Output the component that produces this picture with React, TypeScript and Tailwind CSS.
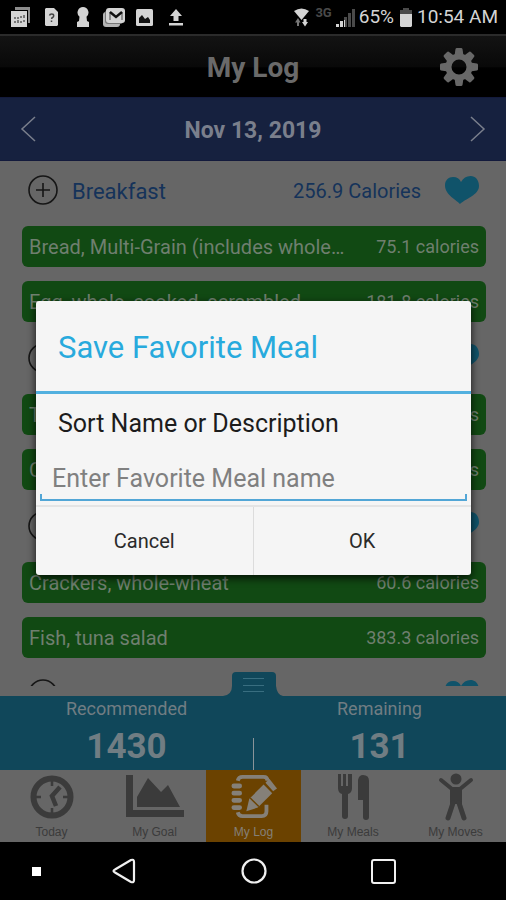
import { useState } from "react";
import type { ReactNode } from "react";

type Food = { name: string; calories: string };
type Meal = { id: string; name?: string; calories?: string; foods: Food[] };

const meals: Meal[] = [
  {
    id: "breakfast",
    name: "Breakfast",
    calories: "256.9",
    foods: [
      { name: "Bread, Multi-Grain (includes whole…", calories: "75.1" },
      { name: "Egg, whole, cooked, scrambled", calories: "181.8" },
    ],
  },
  {
    id: "lunch",
    foods: [
      { name: "T", calories: "" },
      { name: "C", calories: "" },
    ],
  },
  {
    id: "dinner",
    foods: [
      { name: "Crackers, whole-wheat", calories: "60.6" },
      { name: "Fish, tuna salad", calories: "383.3" },
    ],
  },
  { id: "snack", foods: [] },
];

function StatusBar() {
  return (
    <div className="flex h-[34px] shrink-0 items-center justify-between bg-black pl-[11px] pr-2 text-[#d4d4d4]">
      <div className="flex items-center">
        <svg className="mr-[14px]" width="20" height="20" viewBox="0 0 20 20">
          <path d="M4 0h15v16h-2V3H4z" fill="#8c8c8c" />
          <path d="M0 4h16v16H0z" fill="#d4d4d4" />
          <path d="M3 10h2v2H3zm3 0h2v2H6zm3-1h2v2H9zm3-1h2v3h-2zM3 14h2v2H3zm3-1h2v3H6zm3 1h2v2H9zm3-1h2v2h-2z" fill="#777" />
        </svg>
        <svg className="mr-[19px]" width="13" height="18" viewBox="0 0 13 18">
          <path d="M1 0h8l4 4v13l-1 1H1l-1-1V1z" fill="#d4d4d4" />
          <path d="M4.5 7.5q.3-1.500 2.200-1.500 2 0 2 1.700 0 1.200-1.200 1.800-.8.400-.8 1.500M6.500 12.500v1.500" fill="none" stroke="#444" strokeWidth="1.500" />
        </svg>
        <svg className="mr-[14px]" width="12" height="20" viewBox="0 0 12 20">
          <path d="M6 0a5.500 5.500 0 0 1 3.500 9.700L10 14l2 1v5H0v-5l2-1 .5-4.300A5.500 5.500 0 0 1 6 0z" fill="#d4d4d4" />
        </svg>
        <svg className="mr-[11px]" width="22" height="19" viewBox="0 0 22 19">
          <rect x="0" y="4" width="17" height="15" rx="3" fill="#b5b5b5" />
          <rect x="2" y="2" width="18" height="14" rx="3" fill="#777" />
          <rect x="3" y="0" width="19" height="15" rx="3" fill="#d4d4d4" />
          <path d="M7 12V4M19 12V4" stroke="#777" strokeWidth="1.500" />
          <path d="M7 4l6 5 6-5" fill="none" stroke="#111" strokeWidth="2.400" />
        </svg>
        <svg className="mr-4" width="17" height="17" viewBox="0 0 17 17">
          <rect width="17" height="17" rx="1.500" fill="#d4d4d4" />
          <path d="M3 14V9l3-3 3 4 3-2 2 3v3z" fill="#111" />
        </svg>
        <svg width="14" height="17" viewBox="0 0 14 17">
          <path d="M7 0l6 7h-3.500v5h-5V7H1zM0 14h14v2.500H0z" fill="#d4d4d4" />
        </svg>
      </div>
      <div className="flex items-center text-[19px] leading-6">
        <svg className="mr-[6px]" width="15" height="19" viewBox="0 0 15 19">
          <path d="M0 3Q7.500-2 15 3L7.500 12z" fill="#d4d4d4" />
          <path d="M4 10l2.500 4.500H5V18H3v-3.500H1z" fill="#777" />
          <path d="M11 18.500l3-4.500h-1.500v-3h-3v3H8z" fill="#d4d4d4" />
        </svg>
        <span className="mr-1 self-start text-[13px] font-bold leading-4 text-[#4a4a4a]">3G</span>
        <svg className="mr-1" width="19" height="19" viewBox="0 0 19 19">
          <path d="M0 16h3v3H0zM4 13h3v6H4z" fill="#d4d4d4" />
          <path d="M8 9h3v10H8zM12 5h3v14h-3zM16 1h3v18h-3z" fill="#4a4a4a" />
          <path d="M8 12h1v7H8z" fill="#d4d4d4" />
        </svg>
        <span className="mr-[6px]">65%</span>
        <svg className="mr-[5px]" width="12" height="19" viewBox="0 0 12 19">
          <path d="M3 0h6v2h3v4H0V2h3z" fill="#4a4a4a" />
          <path d="M0 6h12v12l-1 1H1l-1-1z" fill="#d4d4d4" />
        </svg>
        <span>10:54 AM</span>
      </div>
    </div>
  );
}

function Gear() {
  return (
    <svg width="38" height="38" viewBox="-19 -19 38 38" fill="#686868">
      {[0, 45, 90, 135, 180, 225, 270, 315].map((a) => (
        <path key={a} d="M-4.500-11L-3.500-18q.3-1 1.300-1h4.400q1 0 1.300 1L4.500-11z" transform={`rotate(${a})`} />
      ))}
      <circle r="10.500" fill="none" stroke="#686868" strokeWidth="6" />
    </svg>
  );
}

function Header() {
  return (
    <header className="grid h-[63px] shrink-0 grid-cols-[1fr_auto_1fr] items-center border-t-2 border-[#2b2b2b] bg-linear-to-b from-[#131313] from-0% via-[#090909] via-50% to-black to-55% px-7">
      <span />
      <h1 className="pt-0.5 text-[28px] font-bold leading-8 text-[#6a6a6a]">My Log</h1>
      <button aria-label="Settings" className="justify-self-end">
        <Gear />
      </button>
    </header>
  );
}

function DateBar() {
  return (
    <div className="flex h-16 shrink-0 items-center justify-between border-y border-[#131a3c] bg-[#16213f] px-5 text-[#7a7f8c]">
      <button aria-label="Previous day">
        <svg width="17" height="28" viewBox="0 0 17 28" fill="none" stroke="currentColor" strokeWidth="1.500">
          <path d="M15 2L2 14l13 12" />
        </svg>
      </button>
      <h2 className="pt-1 text-[23px] font-bold leading-7">Nov 13, 2019</h2>
      <button aria-label="Next day">
        <svg width="17" height="28" viewBox="0 0 17 28" fill="none" stroke="currentColor" strokeWidth="1.500">
          <path d="M2 2l13 12L2 26" />
        </svg>
      </button>
    </div>
  );
}

function MealSection({ meal }: { meal: Meal }) {
  return (
    <section className="pb-[7px]">
      <div className="flex h-[58px] items-center justify-between pl-7 pr-[27px] text-[#15335a]">
        <div className="flex items-center gap-[14px]">
          <button aria-label={`Add to ${meal.id}`}>
            <svg width="30" height="30" viewBox="0 0 30 30" fill="none" stroke="#161616" strokeWidth="1.600">
              <circle cx="15" cy="15" r="14" />
              <path d="M15 8v14M8 15h14" />
            </svg>
          </button>
          {meal.name && <h3 className="pt-1 text-[22px] leading-7">{meal.name}</h3>}
        </div>
        <div className="flex items-center gap-[23px]">
          {meal.calories && <span className="pt-0.5 text-xl leading-7">{meal.calories} Calories</span>}
          <button aria-label={`Save ${meal.id} as favorite`}>
            <svg width="35" height="28" viewBox="0 0 35 28">
              <path d="M16 28C14 25 1 19 1 9.500 1 4 4.500 1 9 1c4 0 6.500 1.500 8 5C19 2 22.500 0 26.500 0 31.500 0 35 4 35 10c0 9-14 13-19 18z" fill="#10536a" />
            </svg>
          </button>
        </div>
      </div>
      <ul className="mt-[7px] flex flex-col gap-[14px] pl-[22px] pr-5">
        {meal.foods.map((food) => (
          <li
            key={food.name}
            className="flex h-[41px] items-center justify-between gap-4 rounded-md bg-[#114913] px-[7px] text-xl leading-7 text-[#6f7f6f]"
          >
            <span className="truncate">{food.name}</span>
            <span className="shrink-0 text-lg leading-7">{food.calories} calories</span>
          </li>
        ))}
      </ul>
    </section>
  );
}

function Summary() {
  return (
    <div className="relative grid h-[74px] shrink-0 grid-cols-2 bg-[#10475a] text-center text-[#707d83]">
      <svg className="absolute -top-6 left-1/2 -translate-x-1/2" width="60" height="25" viewBox="0 0 60 25">
        <path d="M0 25v-1q9-1 9-10V4q0-4 4-4h36q4 0 4 4v10q1 9 7 10v1z" fill="#10475a" />
        <path d="M20 6.500h21M20 13.500h21M20 19.500h21" stroke="#396e80" />
      </svg>
      <div className="pt-px">
        <p className="text-lg leading-6">Recommended</p>
        <p className="mt-2 text-[35px] font-bold leading-9">1430</p>
      </div>
      <div className="pt-px">
        <p className="text-lg leading-6">Remaining</p>
        <p className="mt-2 text-[35px] font-bold leading-9">131</p>
      </div>
      <span className="absolute bottom-0 left-1/2 h-8 w-px bg-[#8a9499]" />
    </div>
  );
}

const tabs: { label: string; icon: ReactNode }[] = [
  {
    label: "Today",
    icon: (
      <svg width="44" height="46" viewBox="0 0 44 46" fill="none" stroke="currentColor">
        <circle cx="22" cy="23" r="18.500" strokeWidth="6" />
        <path d="M22 7v5M22 34v5M6 23h5M33 23h5" strokeWidth="2.500" />
        <path d="M30 13l-8 9 4 10" strokeWidth="4.500" />
      </svg>
    ),
  },
  {
    label: "My Goal",
    icon: (
      <svg width="58" height="46" viewBox="0 0 58 46" fill="currentColor">
        <path d="M0 1h7v35h51v7H0z" />
        <path d="M11 33V23L22 4l13 14 7-7 12 22z" />
      </svg>
    ),
  },
  {
    label: "My Log",
    icon: (
      <svg width="46" height="46" viewBox="0 0 48 46" fill="none" stroke="currentColor">
        <path d="M7 6q1-4 5-4h22q4 0 4 4M7 39q1 4 5 4h20q5 0 5-5v-7" strokeWidth="4" />
        <path d="M3 11.500h6M3 19h6M3 26.500h6M3 34h6" strokeWidth="5" strokeLinecap="round" />
        <path d="M34 10l9 9-15 15-12 4 3-13z" fill="currentColor" stroke="none" />
        <path d="M36 8l4-4 8 10-4 3z" fill="currentColor" stroke="none" />
        <path d="M20 24l9 9" stroke="#6b4200" strokeWidth="1.500" />
      </svg>
    ),
  },
  {
    label: "My Meals",
    icon: (
      <svg width="32" height="46" viewBox="0 0 32 46" fill="currentColor">
        <path d="M1 0h3v12h2V0h3v12h2V0h4v14q0 5-4 6v22q0 3-3 3t-3-3V20q-4-1-4-6z" />
        <path d="M21 6q1-5 5-5 6 0 6 6v36q0 3-3 3t-3-3V26h-5z" />
      </svg>
    ),
  },
  {
    label: "My Moves",
    icon: (
      <svg width="36" height="48" viewBox="0 0 36 48" fill="none" stroke="currentColor">
        <circle cx="18" cy="6" r="5.500" fill="currentColor" stroke="none" />
        <path d="M3 7l11 9h8l11-9" strokeWidth="4" strokeLinecap="round" />
        <path d="M12 14h12v17H12z" fill="currentColor" stroke="none" />
        <path d="M15 30l-5 15M21 30l5 15" strokeWidth="5" strokeLinecap="round" />
      </svg>
    ),
  },
];

function TabBar() {
  const [active, setActive] = useState("My Log");
  return (
    <nav className="grid h-[72px] shrink-0 grid-cols-[103fr_103fr_95fr_104fr_101fr] bg-[#666]">
      {tabs.map((tab) => (
        <button
          key={tab.label}
          onClick={() => setActive(tab.label)}
          className={`flex flex-col items-center justify-start gap-1 pt-1 font-['Liberation_Sans',Arial,sans-serif] ${
            tab.label === active ? "bg-[#6b4200] text-[#858078]" : "text-[#3b3b3b]"
          }`}
        >
          <span className="flex h-[46px] items-center">{tab.icon}</span>
          <span className="text-xs leading-4">{tab.label}</span>
        </button>
      ))}
    </nav>
  );
}

function SystemNav() {
  return (
    <div className="grid h-[58px] shrink-0 grid-cols-[73fr_102fr_157fr_102fr_72fr] items-center justify-items-center bg-black">
      <span className="size-[9px] bg-white" />
      <button aria-label="Back">
        <svg width="24" height="26" viewBox="0 0 24 26" fill="none" stroke="#f0f0f0" strokeWidth="2.200" strokeLinejoin="round">
          <path d="M3 11.500L19 2q3-1 3 2v18q0 3-3 2L3 14.500q-3-1.500 0-3z" />
        </svg>
      </button>
      <button aria-label="Home">
        <svg width="26" height="26" viewBox="0 0 26 26" fill="none" stroke="#f0f0f0" strokeWidth="2.200">
          <circle cx="13" cy="13" r="11.500" />
        </svg>
      </button>
      <button aria-label="Recent apps" className="size-[25px] rounded-[3px] border-2 border-[#f0f0f0]" />
    </div>
  );
}

function FavoriteDialog({ onClose }: { onClose: () => void }) {
  const [name, setName] = useState("");
  return (
    <div className="absolute inset-0 flex items-center justify-center pl-9 pr-[35px]">
      <div
        role="dialog"
        aria-labelledby="favorite-title"
        className="w-full rounded-[3px] bg-[#f5f5f5] shadow-[0_3px_8px_rgba(0,0,0,0.8)]"
      >
        <h2 id="favorite-title" className="border-b-[3px] border-[#52b0df] px-[22px] pb-[25px] pt-[29px] text-[31px] leading-9 text-[#28aadd]">
          Save Favorite Meal
        </h2>
        <div className="px-1 pb-1 pt-[14px]">
          <label htmlFor="favorite-name" className="block px-[18px] text-[25px] leading-8 text-[#1c1c1c]">
            Sort Name or Description
          </label>
          <div className="relative mt-5 h-[41px] border-b-2 border-[#52a6d6] pt-[3px]">
            <input
              id="favorite-name"
              value={name}
              onChange={(e) => setName(e.target.value)}
              placeholder="Enter Favorite Meal name"
              className="block w-full px-3 text-[25px] leading-8 text-[#1c1c1c] outline-none placeholder:text-[#808080]"
            />
            <span className="absolute bottom-0 left-0 h-[5px] w-0.5 bg-[#52a6d6]" />
            <span className="absolute bottom-0 right-0 h-[5px] w-0.5 bg-[#52a6d6]" />
          </div>
        </div>
        <div className="grid h-[70px] grid-cols-2 border-t-2 border-[#e4e4e4] text-xl text-[#2a2a2a]">
          <button onClick={onClose} className="border-r border-[#dcdcdc]">Cancel</button>
          <button onClick={onClose}>OK</button>
        </div>
      </div>
    </div>
  );
}

export default function App() {
  const [dialogOpen, setDialogOpen] = useState(true);
  return (
    <div className="flex h-screen flex-col overflow-hidden bg-black font-[Roboto,sans-serif]">
      <StatusBar />
      <main className="relative flex min-h-0 flex-1 flex-col bg-[#666]">
        <Header />
        <DateBar />
        <div className="mb-[10px] min-h-0 flex-1 overflow-hidden">
          {meals.map((meal) => (
            <MealSection key={meal.id} meal={meal} />
          ))}
        </div>
        <Summary />
        <TabBar />
        {dialogOpen && <FavoriteDialog onClose={() => setDialogOpen(false)} />}
      </main>
      <SystemNav />
    </div>
  );
}
